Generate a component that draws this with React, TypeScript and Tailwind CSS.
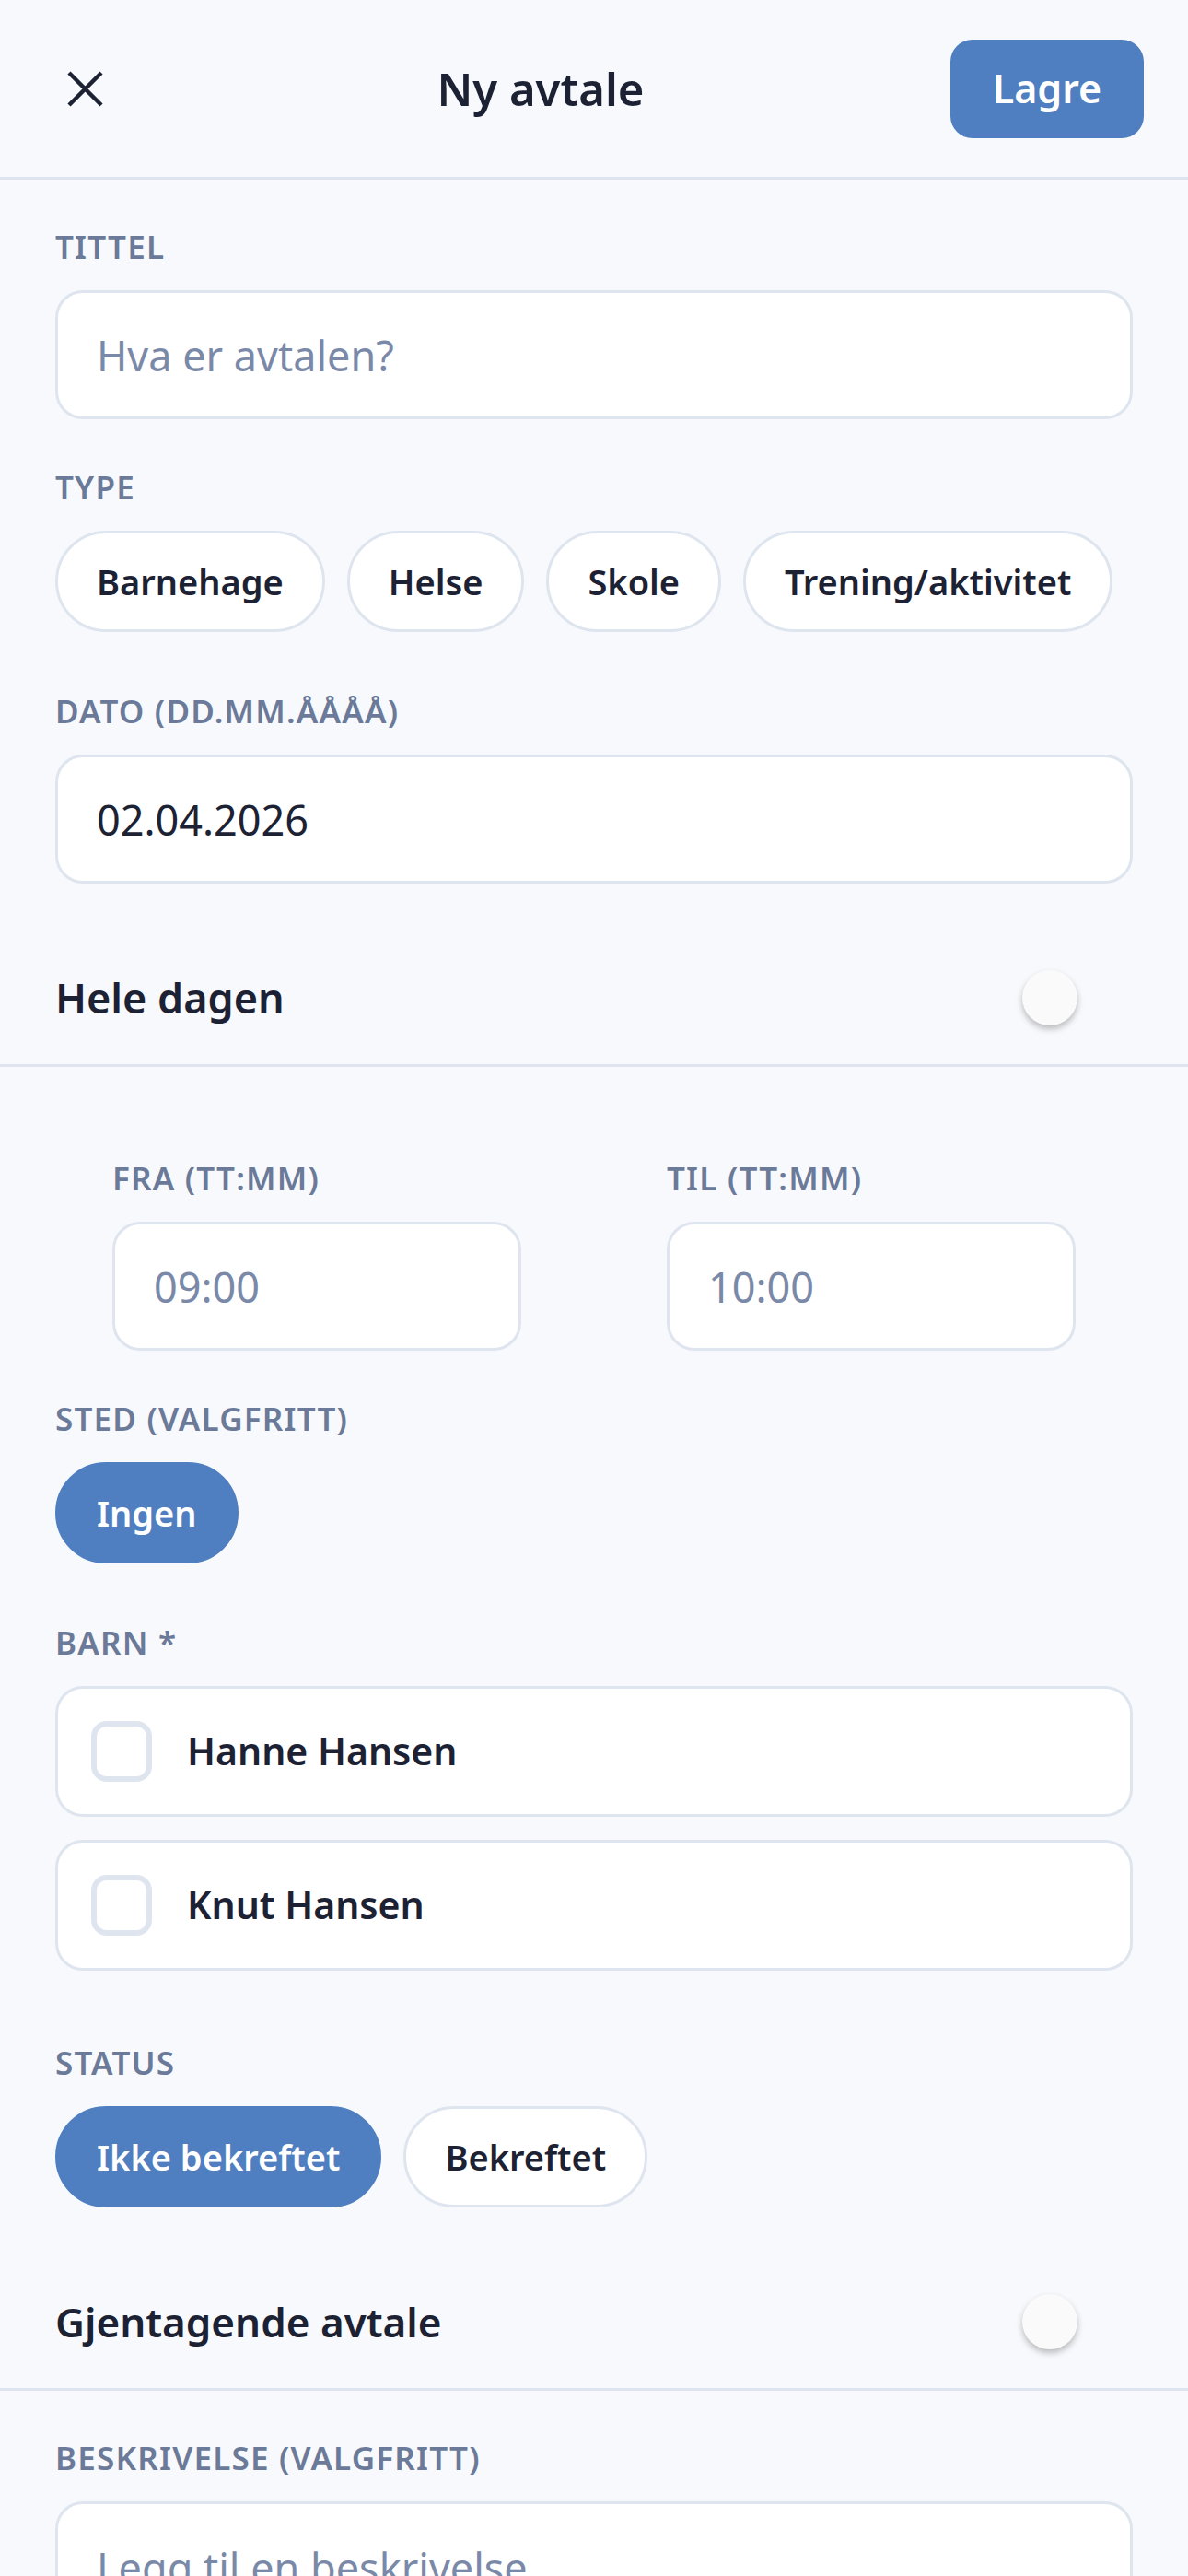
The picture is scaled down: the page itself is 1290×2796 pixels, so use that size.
import React, { useState } from 'react';

const types = ['Barnehage', 'Helse', 'Skole', 'Trening/aktivitet'];
const children = [
  { id: 1, name: 'Hanne Hansen' },
  { id: 2, name: 'Knut Hansen' },
];

function Label({ children, className = '' }: { children: React.ReactNode; className?: string }) {
  return (
    <div
      className={`text-[35px] leading-[48px] font-semibold tracking-[1.2px] text-[#6b7a99] mb-[23px] ${className}`}
    >
      {children}
    </div>
  );
}

function Chip({ label, active, onClick }: { label: string; active?: boolean; onClick?: () => void }) {
  return (
    <button
      onClick={onClick}
      className={`h-[110px] px-[42px] rounded-full border-[3px] text-[38px] font-semibold whitespace-nowrap ${
        active
          ? 'bg-[#4f7fc0] border-[#4f7fc0] text-white'
          : 'bg-white border-[#dfe5ef] text-[#1c2233]'
      }`}
    >
      {label}
    </button>
  );
}

function Toggle({ on, onChange }: { on: boolean; onChange: () => void }) {
  return (
    <button onClick={onChange} className="mr-[60px]">
      <div
        className={`w-[60px] h-[60px] rounded-full shadow-[0_4px_7px_rgba(0,0,0,0.25)] ${
          on ? 'bg-[#4f7fc0]' : 'bg-[#fafafa]'
        }`}
      />
    </button>
  );
}

const inputClass =
  'w-full h-[140px] rounded-[30px] border-[3px] border-[#dfe5ef] bg-white px-[42px] text-[45px] text-[#1c2233] placeholder:text-[#7a89a8] outline-none';

function App() {
  const [type, setType] = useState<string | null>(null);
  const [allDay, setAllDay] = useState(false);
  const [recurring, setRecurring] = useState(false);
  const [selected, setSelected] = useState<number[]>([]);
  const [confirmed, setConfirmed] = useState(false);

  const toggleChild = (id: number) => {
    setSelected(prev => (prev.includes(id) ? prev.filter(c => c !== id) : [...prev, id]));
  };

  return (
    <div className="w-[1290px] h-[2796px] overflow-hidden bg-[#f7f9fc] text-[#1c2233] font-['Noto_Sans',sans-serif]">
      {/* header */}
      <header className="h-[195px] border-b-[3px] border-[#dfe5ef] flex items-center pl-[73px] pr-[48px]">
        <button className="w-[69px] h-[39px] flex items-center">
          <svg width="39" height="39" viewBox="0 0 39 39">
            <path d="M2 2L37 37M37 2L2 37" stroke="#1c2233" strokeWidth="4.5" />
          </svg>
        </button>
        <h1 className="flex-1 text-center text-[49px] leading-[60px] font-semibold">Ny avtale</h1>
        <button className="w-[210px] h-[107px] rounded-[24px] bg-[#4f7fc0] text-white text-[43px] font-semibold">
          Lagre
        </button>
      </header>

      <div className="px-[60px] pt-[49px]">
        <Label>TITTEL</Label>
        <input className={inputClass} placeholder="Hva er avtalen?" />

        <Label className="mt-[50px]">TYPE</Label>
        <div className="flex gap-[24px]">
          {types.map(t => (
            <Chip key={t} label={t} active={type === t} onClick={() => setType(t)} />
          ))}
        </div>

        <Label className="mt-[62px]">DATO (DD.MM.ÅÅÅÅ)</Label>
        <input className={inputClass} defaultValue="02.04.2026" />
      </div>

      <div className="mt-[52px] h-[147px] border-b-[3px] border-[#dfe5ef] flex items-center justify-between px-[60px]">
        <span className="text-[45px] leading-[60px] font-semibold">Hele dagen</span>
        <Toggle on={allDay} onChange={() => setAllDay(!allDay)} />
      </div>

      <div className="flex justify-between px-[122px] pt-[97px]">
        <div className="w-[444px]">
          <Label>FRA (TT:MM)</Label>
          <input className={inputClass} placeholder="09:00" />
        </div>
        <div className="w-[444px]">
          <Label>TIL (TT:MM)</Label>
          <input className={inputClass} placeholder="10:00" />
        </div>
      </div>

      <div className="px-[60px]">
        <Label className="mt-[50px]">STED (VALGFRITT)</Label>
        <div className="flex">
          <Chip label="Ingen" active />
        </div>

        <Label className="mt-[62px]">BARN *</Label>
        <div className="flex flex-col gap-[25px]">
          {children.map(c => (
            <button
              key={c.id}
              onClick={() => toggleChild(c.id)}
              className="h-[142px] rounded-[30px] border-[3px] border-[#dfe5ef] bg-white flex items-center pl-[36px]"
            >
              <div
                className={`w-[66px] h-[66px] rounded-[17px] border-[6px] mr-[38px] ${
                  selected.includes(c.id) ? 'bg-[#4f7fc0] border-[#4f7fc0]' : 'bg-white border-[#dfe5ef]'
                }`}
              />
              <span className="text-[41px] font-semibold">{c.name}</span>
            </button>
          ))}
        </div>

        <Label className="mt-[76px]">STATUS</Label>
        <div className="flex gap-[24px]">
          <Chip label="Ikke bekreftet" active={!confirmed} onClick={() => setConfirmed(false)} />
          <Chip label="Bekreftet" active={confirmed} onClick={() => setConfirmed(true)} />
        </div>
      </div>

      <div className="mt-[52px] h-[147px] border-b-[3px] border-[#dfe5ef] flex items-center justify-between px-[60px]">
        <span className="text-[44px] leading-[60px] font-semibold">Gjentagende avtale</span>
        <Toggle on={recurring} onChange={() => setRecurring(!recurring)} />
      </div>

      <div className="px-[60px] pt-[49px]">
        <Label>BESKRIVELSE (VALGFRITT)</Label>
        <textarea
          className="w-full h-[300px] rounded-[30px] border-[3px] border-[#dfe5ef] bg-white px-[42px] pt-[40px] text-[45px] leading-[58px] placeholder:text-[#7a89a8] outline-none resize-none"
          placeholder="Legg til en beskrivelse"
        />
      </div>
    </div>
  );
}

export default App;
